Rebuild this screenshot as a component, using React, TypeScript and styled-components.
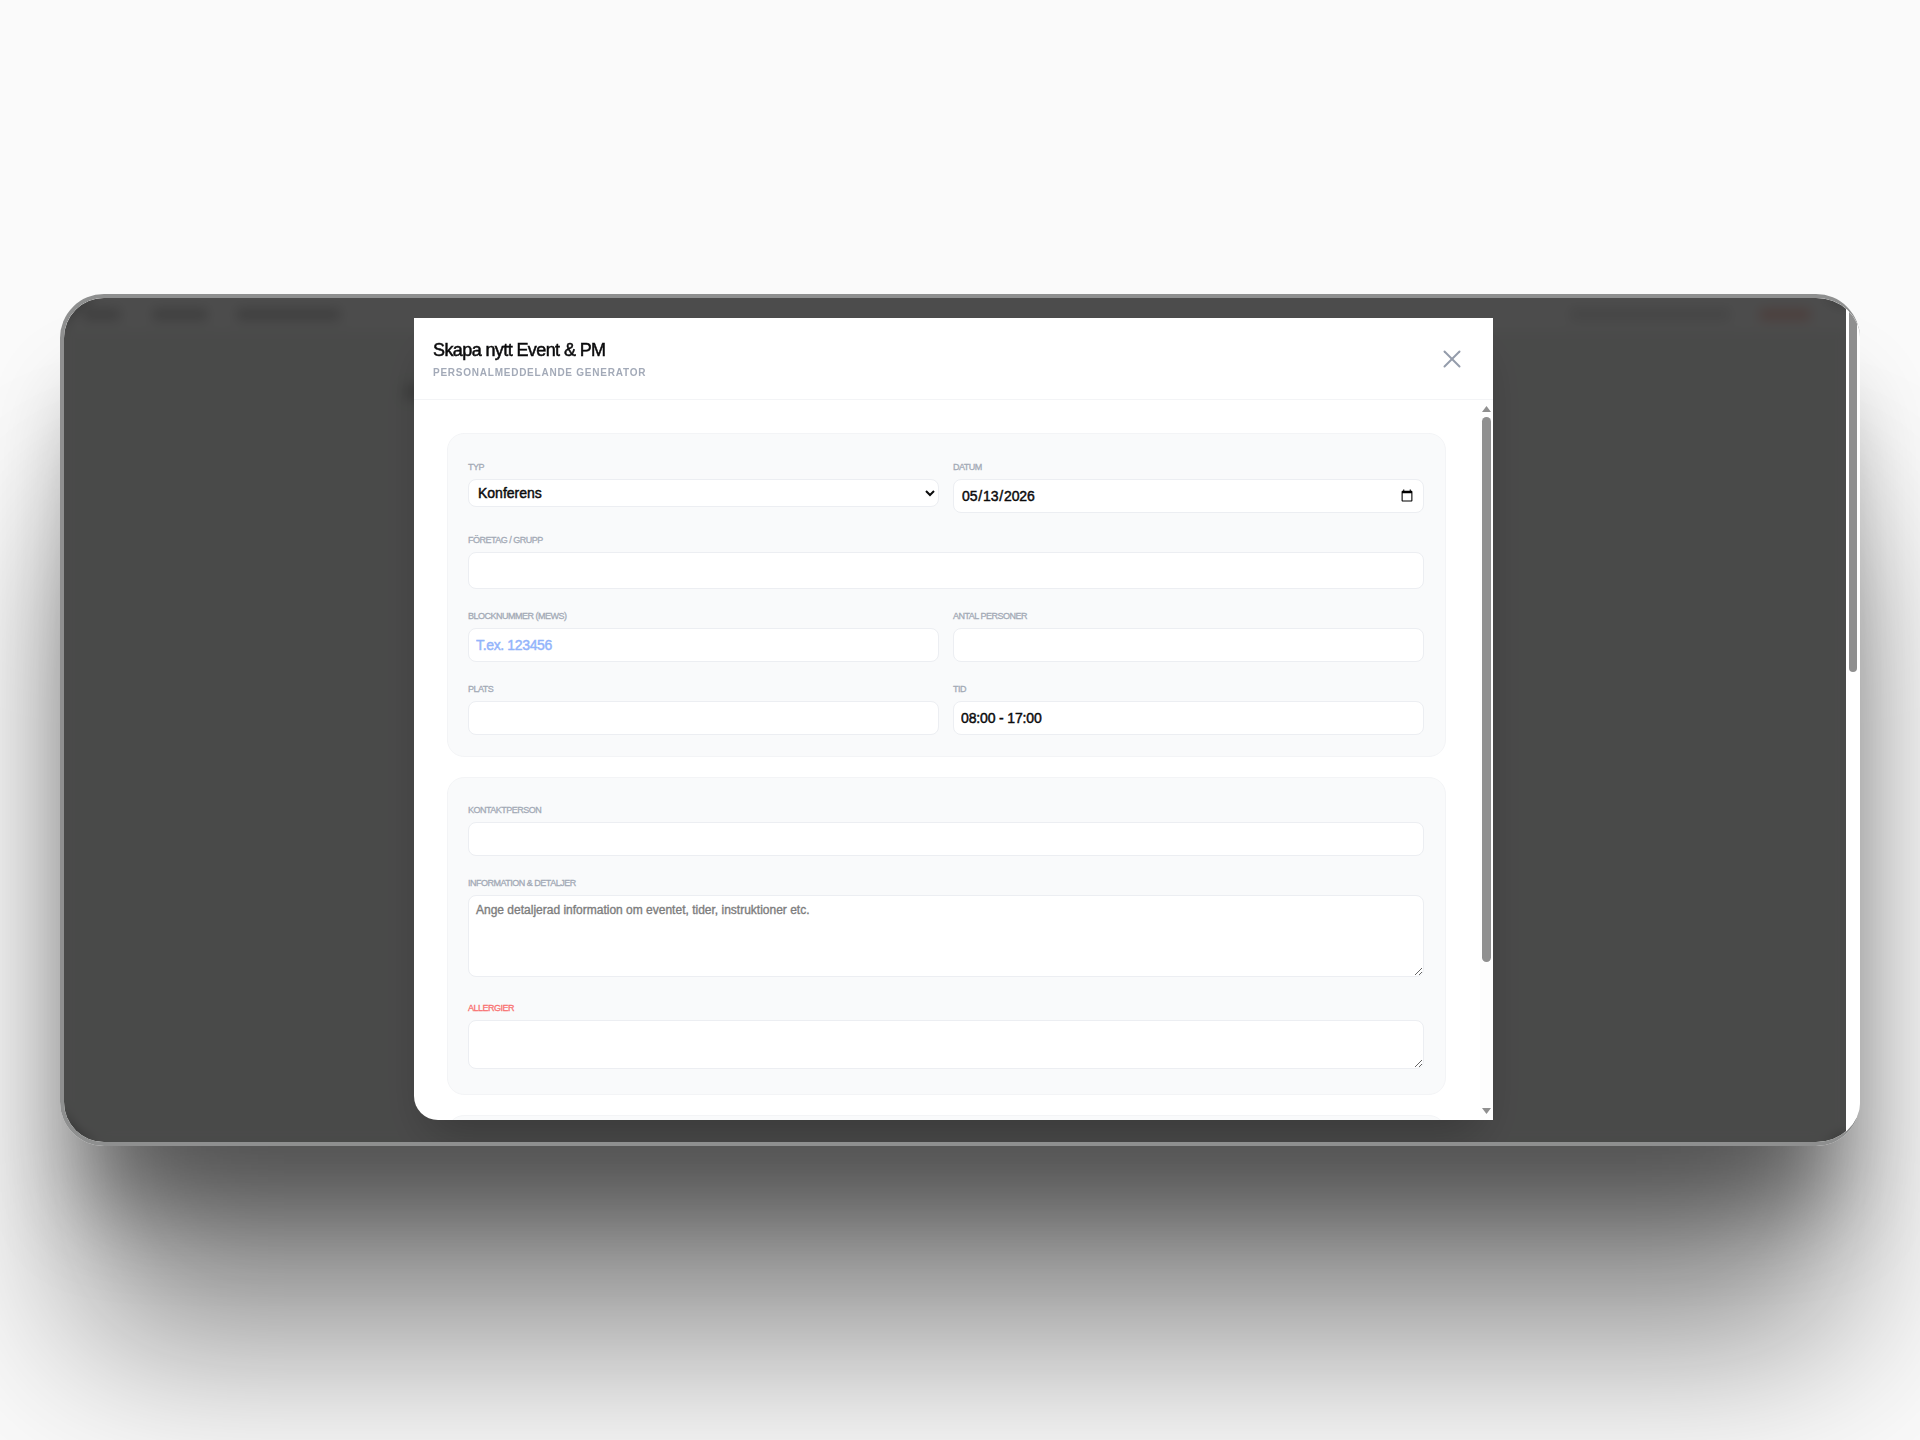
import React from "react";
import styled, { createGlobalStyle } from "styled-components";
import { X } from "lucide-react";

const GlobalStyle = createGlobalStyle`
  html, body {
    margin: 0;
    padding: 0;
    background: #fafafa;
    font-family: "Liberation Sans", Arial, sans-serif;
  }
`;

const Page = styled.div`
  width: 1920px;
  height: 1440px;
  overflow: hidden;
  display: flex;
  align-items: center;
  justify-content: center;
`;

const Shadow = styled.div`
  border-radius: 44px;
  box-shadow: 0 84px 90px -24px rgba(0, 0, 0, 0.42), 0 216px 170px -20px rgba(0, 0, 0, 0.44);
`;

const Frame = styled.div`
  box-sizing: border-box;
  width: 1800px;
  height: 852px;
  display: flex;
  background: #fff;
  border: 4px solid #8e8f8f;
  border-right: 0;
  border-radius: 44px;
  overflow: hidden;
`;

const Screen = styled.div`
  position: relative;
  flex: 1;
  min-width: 0;
  overflow: hidden;
  background: #f6f8f6;
`;

const PageScrollbar = styled.div`
  flex: none;
  width: 14px;
  background: #fff;
`;

const PageThumb = styled.div`
  width: 8px;
  height: 374px;
  margin: 0 3px;
  background: #8f8f8f;
  border-radius: 4px;
`;

const NavBar = styled.div`
  display: flex;
  align-items: center;
  height: 32px;
  padding: 0 36px 0 19px;
  background: #fff;
`;

const NavBlock = styled.div<{ $width: number; $color?: string; $gap?: number }>`
  width: ${(p) => p.$width}px;
  height: 11px;
  margin-left: ${(p) => p.$gap ?? 0}px;
  background: ${(p) => p.$color ?? "#cfcfcf"};
`;

const NavSpacer = styled.div`
  flex: 1;
`;

const PageHeading = styled.div`
  width: 220px;
  height: 16px;
  margin: 54px 0 0 340px;
  background: #cfcfcf;
`;

const Overlay = styled.div`
  position: absolute;
  inset: 0;
  padding: 20px 0 0 349.5px;
  box-sizing: border-box;
  background: rgba(0, 0, 0, 0.7);
  backdrop-filter: blur(6px);
`;

const Modal = styled.div`
  width: 1079.5px;
  height: 802px;
  display: flex;
  flex-direction: column;
  background: #fff;
  border-radius: 0 0 0 24px;
  overflow: hidden;
  box-shadow: 0 25px 50px -12px rgba(0, 0, 0, 0.25);
`;

const ModalHeader = styled.header`
  flex: none;
  box-sizing: border-box;
  height: 82px;
  display: flex;
  align-items: center;
  justify-content: space-between;
  padding: 0 26px 0 19.5px;
  border-bottom: 1px solid #f3f4f6;
`;

const Title = styled.h2`
  margin: 0;
  font-size: 18px;
  line-height: 24px;
  font-weight: 400;
  letter-spacing: -0.6px;
  color: #0b0b0c;
  -webkit-text-stroke: 0.5px #0b0b0c;
`;

const Subtitle = styled.p`
  margin: 4px 0 0;
  font-size: 10px;
  line-height: 14px;
  font-weight: 700;
  letter-spacing: 0.76px;
  color: #a3aab8;
  text-transform: uppercase;
`;

const CloseButton = styled.button`
  display: flex;
  padding: 0;
  border: 0;
  background: none;
  color: #949cab;
  cursor: pointer;
`;

const ModalMain = styled.div`
  flex: 1;
  min-height: 0;
  display: flex;
`;

const ModalBody = styled.div`
  flex: 1;
  min-width: 0;
  display: flex;
  flex-direction: column;
  gap: 20px;
  padding: 33px 34px 33px 33.5px;
  overflow: hidden;
`;

const ModalScrollbar = styled.div`
  flex: none;
  width: 13px;
  display: flex;
  flex-direction: column;
  align-items: center;
  background: #fdfdfd;
`;

const ScrollArrow = styled.svg<{ $down?: boolean }>`
  flex: none;
  display: block;
  margin: ${(p) => (p.$down ? "0 0 6px" : "6px 0 0")};
  fill: #8f8f8f;
`;

const ModalThumb = styled.div`
  width: 9px;
  height: 545px;
  margin: 5px 0 auto;
  background: #8f8f8f;
  border-radius: 5px;
`;

const Card = styled.section<{ $minHeight?: number }>`
  flex: none;
  display: grid;
  grid-template-columns: 1fr 1fr;
  gap: 21px 14px;
  align-items: start;
  align-content: start;
  min-height: ${(p) => p.$minHeight ?? 0}px;
  padding: 26.5px 21px 21px 20px;
  background: #f9fafb;
  border: 1px solid #f3f4f6;
  border-radius: 17px;
`;

const Field = styled.label<{ $wide?: boolean }>`
  display: flex;
  flex-direction: column;
  gap: 6px;
  min-width: 0;
  grid-column: ${(p) => (p.$wide ? "1 / -1" : "auto")};
`;

const LabelText = styled.span<{ $alert?: boolean }>`
  height: 12px;
  font-size: 9px;
  line-height: 12px;
  font-weight: 400;
  letter-spacing: -0.5px;
  text-transform: uppercase;
  color: ${(p) => (p.$alert ? "#f87171" : "#a3aab6")};
  -webkit-text-stroke: 0.3px ${(p) => (p.$alert ? "#f87171" : "#a3aab6")};
`;

const controlBase = `
  display: block;
  box-sizing: border-box;
  width: 100%;
  background: #fff;
  border: 1px solid #eceef2;
  border-radius: 8px;
  font-family: "Liberation Sans", Arial, sans-serif;
  font-weight: 400;
  color: #0b0b0c;
  outline: none;
`;

const Select = styled.select`
  ${controlBase}
  height: 28px;
  padding: 0 2px 0 5px;
  font-size: 14px;
  -webkit-text-stroke: 0.45px #0b0b0c;
`;

const Input = styled.input<{ $height?: number; $accent?: boolean }>`
  ${controlBase}
  height: ${(p) => p.$height ?? 34}px;
  padding: 0 7px;
  font-size: 14px;
  letter-spacing: -0.15px;
  -webkit-text-stroke: 0.45px #0b0b0c;

  &::placeholder {
    color: ${(p) => (p.$accent ? "#93b4fb" : "#757575")};
    letter-spacing: -0.35px;
    -webkit-text-stroke: 0.45px ${(p) => (p.$accent ? "#93b4fb" : "#757575")};
    opacity: 1;
  }
`;

const TextArea = styled.textarea<{ $height: number }>`
  ${controlBase}
  height: ${(p) => p.$height}px;
  margin-bottom: 4px;
  padding: 7px 7px;
  font-size: 12px;
  line-height: 15px;
  resize: vertical;

  &::placeholder {
    color: #7d7d7d;
    -webkit-text-stroke: 0.35px #7d7d7d;
    opacity: 1;
  }
`;

export default function App() {
  return (
    <Page>
      <GlobalStyle />
      <Shadow>
        <Frame>
          <Screen>
            <NavBar>
              <NavBlock $width={37} />
              <NavBlock $width={54} $gap={33} />
              <NavBlock $width={103} $gap={30} />
              <NavSpacer />
              <NavBlock $width={160} $color="#e6e6e6" />
              <NavBlock $width={50} $gap={30} $color="#ffd0c8" />
            </NavBar>
            <PageHeading />
            <Overlay>
              <Modal>
                <ModalHeader>
                  <div>
                    <Title>Skapa nytt Event &amp; PM</Title>
                    <Subtitle>Personalmeddelande generator</Subtitle>
                  </div>
                  <CloseButton type="button" aria-label="Stäng">
                    <X size={30} strokeWidth={1.6} />
                  </CloseButton>
                </ModalHeader>
                <ModalMain>
                  <ModalBody>
                    <Card>
                      <Field>
                        <LabelText>Typ</LabelText>
                        <Select defaultValue="Konferens">
                          <option>Konferens</option>
                          <option>Event</option>
                        </Select>
                      </Field>
                      <Field>
                        <LabelText>Datum</LabelText>
                        <Input type="date" defaultValue="2026-05-13" />
                      </Field>
                      <Field $wide>
                        <LabelText>Företag / Grupp</LabelText>
                        <Input type="text" $height={37} />
                      </Field>
                      <Field>
                        <LabelText>Blocknummer (Mews)</LabelText>
                        <Input type="text" $accent placeholder="T.ex. 123456" />
                      </Field>
                      <Field>
                        <LabelText>Antal personer</LabelText>
                        <Input type="text" />
                      </Field>
                      <Field>
                        <LabelText>Plats</LabelText>
                        <Input type="text" />
                      </Field>
                      <Field>
                        <LabelText>Tid</LabelText>
                        <Input type="text" defaultValue="08:00 - 17:00" />
                      </Field>
                    </Card>
                    <Card>
                      <Field $wide>
                        <LabelText>Kontaktperson</LabelText>
                        <Input type="text" />
                      </Field>
                      <Field $wide>
                        <LabelText>Information &amp; detaljer</LabelText>
                        <TextArea
                          $height={82}
                          placeholder="Ange detaljerad information om eventet, tider, instruktioner etc."
                        />
                      </Field>
                      <Field $wide>
                        <LabelText $alert>Allergier</LabelText>
                        <TextArea $height={49} />
                      </Field>
                    </Card>
                    <Card $minHeight={166} />
                  </ModalBody>
                  <ModalScrollbar>
                    <ScrollArrow width="9" height="6" viewBox="0 0 9 6">
                      <polygon points="4.5,0 9,6 0,6" />
                    </ScrollArrow>
                    <ModalThumb />
                    <ScrollArrow $down width="9" height="6" viewBox="0 0 9 6">
                      <polygon points="0,0 9,0 4.5,6" />
                    </ScrollArrow>
                  </ModalScrollbar>
                </ModalMain>
              </Modal>
            </Overlay>
          </Screen>
          <PageScrollbar>
            <PageThumb />
          </PageScrollbar>
        </Frame>
      </Shadow>
    </Page>
  );
}
